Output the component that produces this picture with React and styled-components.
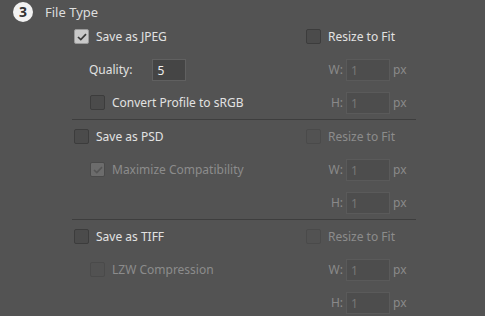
import React from 'react'
import styled, { createGlobalStyle, css } from 'styled-components'

const GlobalStyle = createGlobalStyle`
	html, body {
		margin: 0;
		padding: 0;
		background: #535353;
	}
	body {
		font-family: "Noto Sans", "Open Sans", sans-serif;
		font-size: 12px;
		color: #e4e4e4;
	}
`

const sections = [
	{
		id: 'jpeg',
		label: 'Save as JPEG',
		checked: true,
		resizeEnabled: true,
		quality: '5',
		sub: { label: 'Convert Profile to sRGB', checked: false, disabled: false },
	},
	{
		id: 'psd',
		label: 'Save as PSD',
		checked: false,
		resizeEnabled: false,
		sub: { label: 'Maximize Compatibility', checked: true, disabled: true },
	},
	{
		id: 'tiff',
		label: 'Save as TIFF',
		checked: false,
		resizeEnabled: false,
		sub: { label: 'LZW Compression', checked: false, disabled: true },
	},
]

const Check = ({ checked, disabled }) => (
	<Box $checked={checked} $disabled={disabled}>
		{checked && (
			<svg width="10" height="8" viewBox="0 0 10 8">
				<path d="M1 4 L3.8 6.6 L9 1.2" fill="none" stroke={disabled ? '#555' : '#3a3a3a'} strokeWidth="1.7" />
			</svg>
		)}
	</Box>
)

const CheckRow = ({ label, checked, disabled, indent }) => (
	<Cell $indent={indent}>
		<Check checked={checked} disabled={disabled} />
		<Label $disabled={disabled}>{label}</Label>
	</Cell>
)

const SizeField = ({ axis, disabled }) => (
	<Cell $indent={19}>
		<AxisLabel $disabled={disabled}>{axis}:</AxisLabel>
		<Field $w={44} $disabled={disabled}>1</Field>
		<Unit $disabled={disabled}>px</Unit>
	</Cell>
)

export default function App() {
	return (
		<Panel>
			<GlobalStyle />
			<Header>
				<StepBadge>3</StepBadge>
				<Title>File Type</Title>
			</Header>
			<List>
				{sections.map((s) => (
					<Section key={s.id}>
						<CheckRow label={s.label} checked={s.checked} />
						<CheckRow label="Resize to Fit" checked={false} disabled={!s.resizeEnabled} />
						{s.quality ? (
							<Cell $indent={8}>
								<Label>Quality:</Label>
								<Field $w={34} $gap={20}>{s.quality}</Field>
							</Cell>
						) : (
							<CheckRow {...s.sub} indent={16} />
						)}
						<SizeField axis="W" disabled />
						{s.quality ? <CheckRow {...s.sub} indent={16} /> : <div />}
						<SizeField axis="H" disabled />
					</Section>
				))}
			</List>
		</Panel>
	)
}
// --------------------------------------------------------
const Panel = styled.div`
	width: 485px;
	height: 316px;
	overflow: hidden;
`
// --------------------------------------------------------
const Header = styled.div`
	display: flex;
	align-items: flex-start;
	height: 18px;
	padding: 2px 0 0 13px;
`
// --------------------------------------------------------
const StepBadge = styled.div`
	flex: none;
	width: 20px;
	height: 20px;
	border-radius: 50%;
	background: #f2f2f2;
	color: #333;
	font-weight: 700;
	font-size: 14px;
	line-height: 20px;
	text-align: center;
`
// --------------------------------------------------------
const Title = styled.span`
	margin-left: 12px;
	font-size: 13px;
	line-height: 20px;
	color: #dedede;
`
// --------------------------------------------------------
const List = styled.div`
	margin-left: 72px;
	width: 344px;
`
// --------------------------------------------------------
const Section = styled.div`
	display: grid;
	grid-template-columns: 232px 1fr;
	grid-auto-rows: 33px;
	border-bottom: 1px solid #3e3e3e;
	&:last-child {
		border-bottom: none;
	}
`
// --------------------------------------------------------
const Cell = styled.div`
	display: flex;
	align-items: center;
	padding-left: ${(p) => 2 + (p.$indent || 0)}px;
`
// --------------------------------------------------------
const Box = styled.div`
	box-sizing: border-box;
	width: 15px;
	height: 15px;
	border-radius: 2px;
	display: flex;
	align-items: center;
	justify-content: center;
	border: 1px solid #3c3c3c;
	background: #4b4b4b;
	${(p) => p.$checked && css`
		background: #c9c9c9;
		border-color: #9a9a9a;
	`}
	${(p) => p.$disabled && css`
		border-color: #4a4a4a;
		background: ${p.$checked ? '#6c6c6c' : '#525252'};
	`}
`
// --------------------------------------------------------
const Label = styled.span`
	margin-left: 7px;
	color: ${(p) => (p.$disabled ? '#8c8c8c' : '#e2e2e2')};
	white-space: nowrap;
`
// --------------------------------------------------------
const AxisLabel = styled.span`
	width: 18px;
	text-align: right;
	color: ${(p) => (p.$disabled ? '#8a8a8a' : '#e2e2e2')};
`
// --------------------------------------------------------
const Field = styled.div`
	box-sizing: border-box;
	width: ${(p) => p.$w}px;
	height: 22px;
	margin-left: ${(p) => p.$gap || 3}px;
	padding: 2px 0 0 4px;
	background: ${(p) => (p.$disabled ? '#4d4d4d' : '#454545')};
	border: 1px solid ${(p) => (p.$disabled ? '#5a5a5a' : '#606060')};
	color: ${(p) => (p.$disabled ? '#777' : '#f0f0f0')};
`
// --------------------------------------------------------
const Unit = styled.span`
	margin-left: 3px;
	color: ${(p) => (p.$disabled ? '#8a8a8a' : '#e2e2e2')};
`
